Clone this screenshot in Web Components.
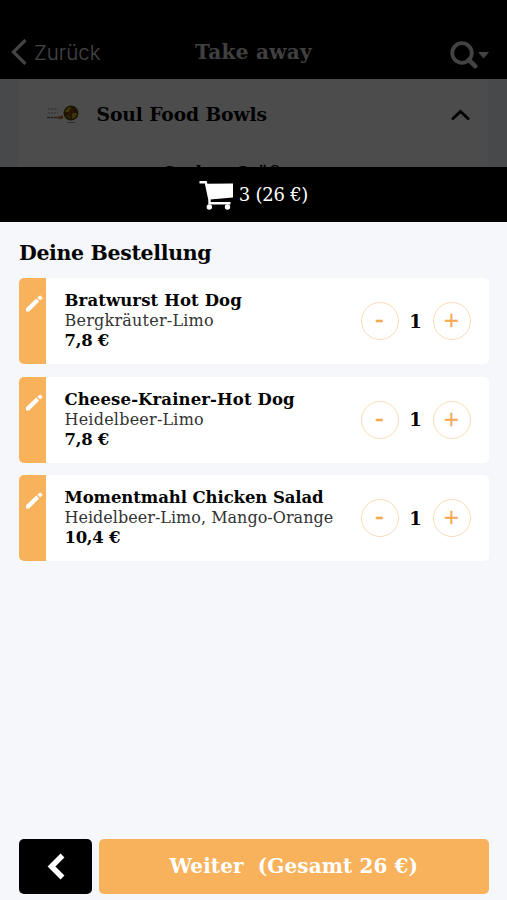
<!DOCTYPE html>
<html lang="de">
<head>
<meta charset="utf-8">
<meta name="viewport" content="width=device-width, initial-scale=1">
<title>Take away</title>
<style>
	html, body { height:100%; }
	body {
		margin:0;
		overflow:hidden;
		background:#f5f7fb;
		color:#050505;
		font-family:"DejaVu Serif", serif;
		--accent:#f8b25c;
	}
</style>
</head>
<body>

<order-app>
	<menu-page slot="behind" back="Zurück" heading="Take away">
		<menu-category>
			<span>Soul Food Bowls</span>
			<span slot="first">Gurken-Grüße</span>
		</menu-category>
	</menu-page>
	<cart-bar>3 (26 €)</cart-bar>
	<order-list>
		<span slot="heading">Deine Bestellung</span>
		<order-item count="1">
			<span>Bratwurst Hot Dog</span>
			<span slot="options">Bergkräuter-Limo</span>
			<span slot="price">7,8 €</span>
		</order-item>
		<order-item count="1">
			<span>Cheese-Krainer-Hot Dog</span>
			<span slot="options">Heidelbeer-Limo</span>
			<span slot="price">7,8 €</span>
		</order-item>
		<order-item count="1" style="--name-spacing:-.09px; --options-spacing:.02px">
			<span>Momentmahl Chicken Salad</span>
			<span slot="options">Heidelbeer-Limo, Mango-Orange</span>
			<span slot="price">10,4 €</span>
		</order-item>
	</order-list>
	<order-actions slot="footer">Weiter&nbsp; (Gesamt 26 €)</order-actions>
</order-app>

<script>
function define(name, html, init) {
	customElements.define(name, class extends HTMLElement {
		constructor() {
			super();
			this.attachShadow({mode:'open'}).innerHTML = html;
		}
		connectedCallback() {
			init && init.call(this, this.shadowRoot);
		}
	});
}

/* page */
define('order-app', `
<style>
	:host { display:flex; flex-direction:column; height:100vh; }
	.behind { flex:0 0 167px; position:relative; overflow:hidden; }
	.behind::after { content:""; position:absolute; inset:0; background:rgba(0,0,0,.7); }
	.body { flex:1; }
</style>
<div class="behind"><slot name="behind"></slot></div>
<div class="body"><slot></slot></div>
<slot name="footer"></slot>
`);

/* menu behind the backdrop */
define('menu-page', `
<style>
	:host { display:block; background:#eef3f8; }
	header {
		display:grid;
		grid-template-columns:1fr auto 1fr;
		align-items:center;
		height:79px;
		box-sizing:border-box;
		padding:25px 18px 0 11px;
		background:#000;
		color:#fff;
	}
	.back { display:flex; align-items:center; gap:7px; font:300 20.500px/1 Inter, sans-serif; color:#e0e0e0; }
	#back { padding-top:2px; }
	.title { padding-left:7px; font-size:20px; line-height:1; font-weight:bold; color:#d8d8d8; letter-spacing:.3px; }
	.search { display:flex; justify-content:flex-end; align-items:center; padding-top:6px; }
	svg { display:block; fill:none; stroke:#e0e0e0; }
	main { padding:0 19px; }
</style>
<header>
	<div class="back">
		<svg width="16" height="26" viewBox="0 0 16 26" stroke-width="3.2"><path d="M14.5 1 2.4 13l12.1 12"/></svg>
		<span id="back"></span>
	</div>
	<div class="title"></div>
	<div class="search">
		<svg width="28" height="28" viewBox="0 0 28 28" stroke-width="3.8"><circle cx="12" cy="12" r="9.800"/><path d="m19 19 6.200 6.200" stroke-width="4.6" stroke-linecap="round"/></svg>
		<svg width="11" height="7" viewBox="0 0 11 7"><path d="M0 0h11L5.500 6.500z" fill="#e0e0e0" stroke="none"/></svg>
	</div>
</header>
<main><slot></slot></main>
`, function(root){
	root.querySelector('#back').textContent = this.getAttribute('back');
	root.querySelector('.title').textContent = this.getAttribute('heading');
});

define('menu-category', `
<style>
	:host { display:block; height:120px; background:#fff; }
	.head { display:flex; align-items:center; height:71px; padding:0 18px 0 27px; }
	.logo { flex:0 0 50.500px; }
	.name { flex:1; padding-bottom:2px; font-size:18.700px; font-weight:bold; letter-spacing:-.1px; }
	.first { padding:13px 0 0 143px; font-size:16px; line-height:20px; font-weight:bold; }
	svg { display:block; }
</style>
<div class="head">
	<div class="logo">
		<svg width="34" height="22" viewBox="0 0 34 22">
			<path d="M2 5h10M2 9h10" stroke="#999" stroke-width="1" stroke-dasharray="2 1"/>
			<path d="M1 13.500h12" stroke="#777" stroke-width="1.600" stroke-dasharray="3 .6"/>
			<path d="m11 13 6-2v4h-5z" fill="#cf7a55"/>
			<circle cx="25" cy="9" r="7.500" fill="#5a4a10"/>
			<path d="M19 8q2-5 6-5l-1 5zM26 9l5 0q0 4-5 6zM20 11l4 1 0 3z" fill="#c8b400"/>
			<path d="m24 5 4-1 0 4-5 5-2-2z" fill="#9c3c18"/>
			<path d="M21 18.500h8" stroke="#999"/>
		</svg>
	</div>
	<div class="name"><slot></slot></div>
	<svg width="19" height="12" viewBox="0 0 19 12" fill="none" stroke="#000" stroke-width="3" stroke-linecap="round"><path d="m2 9.500 7.500-7 7.500 7"/></svg>
</div>
<div class="first"><slot name="first"></slot></div>
`);

/* cart summary */
define('cart-bar', `
<style>
	:host {
		display:flex;
		justify-content:center;
		align-items:center;
		gap:5px;
		height:55px;
		background:#000;
		color:#fff;
		font-size:18px;
		letter-spacing:-.25px;
	}
	svg { display:block; }
	span { padding-bottom:1px; }
</style>
<svg width="35" height="30" viewBox="0 0 35 30" fill="#fff">
	<path d="M7.500 3.800 34 3.500v14L11 19.500z"/>
	<path d="M.5 2.300h6.300l3.700 17.500V23.300h21" fill="none" stroke="#fff" stroke-width="2.400"/>
	<circle cx="10.300" cy="27" r="2.700"/><circle cx="28.500" cy="27" r="2.700"/>
</svg>
<span><slot></slot></span>
`);

/* order */
define('order-list', `
<style>
	:host { display:block; padding:17px 18.500px 0 19px; }
	h1 { margin:0 0 11px; font-size:20.500px; line-height:28px; letter-spacing:-.35px; }
	.items { display:grid; gap:12.500px; }
</style>
<h1><slot name="heading"></slot></h1>
<div class="items"><slot></slot></div>
`);

define('order-item', `
<style>
	:host { display:flex; height:86px; border-radius:5px; overflow:hidden; background:#fff; }
	.edit { flex:0 0 27px; background:var(--accent); }
	.edit svg { display:block; margin:17px 0 0 7px; }
	.text { flex:1; padding:13px 0 0 18.500px; line-height:20px; font-size:16.500px; white-space:nowrap; }
	.text > div { height:20px; }
	.name, .price { font-weight:bold; }
	.name { letter-spacing:var(--name-spacing, .12px); }
	.options { font-size:16px; color:#333; letter-spacing:var(--options-spacing, .22px); }
	.price { letter-spacing:-.3px; }
	quantity-stepper { margin-right:18px; }
</style>
<div class="edit">
	<svg width="17" height="17" viewBox="0 0 17 17" fill="#fff"><path d="M0 16.500v-3.300L10.300 3.600l2.800 2.800L3.200 16.500zM11.300 2.700 13.500.8q.6-.5 1.200 0l1.500 1.500q.6.6 0 1.200l-2.100 2z"/></svg>
</div>
<div class="text">
	<div class="name"><slot></slot></div>
	<div class="options"><slot name="options"></slot></div>
	<div class="price"><slot name="price"></slot></div>
</div>
<quantity-stepper></quantity-stepper>
`, function(root){
	root.querySelector('quantity-stepper').setAttribute('value', this.getAttribute('count'));
});

customElements.define('quantity-stepper', class extends HTMLElement {
	constructor() {
		super();
		this.attachShadow({mode:'open'}).innerHTML = `
		<style>
			:host { display:grid; grid-template-columns:38px 34px 38px; align-items:center; text-align:center; }
			button {
				width:38px;
				height:38px;
				padding:0 0 2px;
				border:1px solid #fbdcb8;
				border-radius:50%;
				background:none;
				color:#f5aa50;
				font:20px/34px "DejaVu Serif", serif;
				-webkit-text-stroke:.3px;
			}
			.minus { font-size:26px; line-height:30px; padding-bottom:4px; }
			output { font-size:18px; font-weight:bold; }
		</style>
		<button class="minus" aria-label="weniger">-</button>
		<output></output>
		<button class="plus" aria-label="mehr">+</button>
		`;
		let [minus, plus] = this.shadowRoot.querySelectorAll('button');
		minus.addEventListener('click', ()=>this.step(-1));
		plus.addEventListener('click', ()=>this.step(1));
	}
	static get observedAttributes() {
		return ['value'];
	}
	attributeChangedCallback(name, old, value) {
		this.shadowRoot.querySelector('output').textContent = value;
	}
	step(diff) {
		this.setAttribute('value', Math.max(0, Number(this.getAttribute('value')) + diff));
	}
});

/* footer */
define('order-actions', `
<style>
	:host { display:grid; grid-template-columns:73px 1fr; gap:7px; height:55px; padding:0 18.500px 6px 19px; }
	button { border:0; padding:0; border-radius:5px; color:#fff; font:inherit; font-weight:bold; font-size:20px; }
	.back { display:grid; place-items:center; background:#000; }
	.next { padding-bottom:1px; background:var(--accent); letter-spacing:.1px; }
</style>
<button class="back" aria-label="zurück"><svg width="18" height="27" viewBox="0 0 18 27" fill="none" stroke="#fff" stroke-width="5.500"><path d="M15.500 2.500 4.500 13.500 15.500 24.500"/></svg></button>
<button class="next"><slot></slot></button>
`);
</script>
</body>
</html>
